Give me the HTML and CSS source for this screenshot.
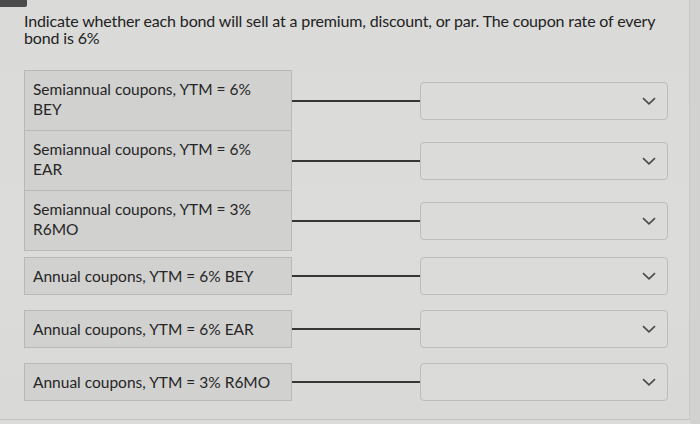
FILE: index.html
```html
<!DOCTYPE html>
<html lang="en">
<head>
<meta charset="utf-8">
<title>Bond premium / discount</title>
<link rel="stylesheet" href="styles.css">
</head>
<body>
<div class="screen">
  <div class="corner"></div>
  <div class="page">
    <p class="prompt">Indicate whether each bond will sell at a premium, discount, or par. The coupon rate of every bond is 6%</p>
    <div class="group stacked">
      <div class="row tall">
        <div class="term">Semiannual coupons, YTM = 6%<br>BEY</div>
        <div class="link"></div>
        <div class="select"><svg class="chev" viewBox="0 0 14 8"><path d="M1 1.2 7 6.8 13 1.2"/></svg></div>
      </div>
      <div class="row tall">
        <div class="term">Semiannual coupons, YTM = 6%<br>EAR</div>
        <div class="link"></div>
        <div class="select"><svg class="chev" viewBox="0 0 14 8"><path d="M1 1.2 7 6.8 13 1.2"/></svg></div>
      </div>
      <div class="row tall">
        <div class="term">Semiannual coupons, YTM = 3%<br>R6MO</div>
        <div class="link"></div>
        <div class="select"><svg class="chev" viewBox="0 0 14 8"><path d="M1 1.2 7 6.8 13 1.2"/></svg></div>
      </div>
    </div>
    <div class="group spaced">
      <div class="row">
        <div class="term">Annual coupons, YTM = 6% BEY</div>
        <div class="link"></div>
        <div class="select"><svg class="chev" viewBox="0 0 14 8"><path d="M1 1.2 7 6.8 13 1.2"/></svg></div>
      </div>
      <div class="row">
        <div class="term">Annual coupons, YTM = 6% EAR</div>
        <div class="link"></div>
        <div class="select"><svg class="chev" viewBox="0 0 14 8"><path d="M1 1.2 7 6.8 13 1.2"/></svg></div>
      </div>
      <div class="row">
        <div class="term">Annual coupons, YTM = 3% R6MO</div>
        <div class="link"></div>
        <div class="select"><svg class="chev" viewBox="0 0 14 8"><path d="M1 1.2 7 6.8 13 1.2"/></svg></div>
      </div>
    </div>
  </div>
</div>
</body>
</html>
```
FILE: styles.css
```css
html, body {
  margin: 0;
  padding: 0;
  background: #e4e4e2;
}
body {
  width: 700px;
  height: 424px;
  overflow: hidden;
  font-family: Lato, "Open Sans", sans-serif;
  color: #2a2a2a;
}
.screen {
  position: relative;
  width: 700px;
  height: 424px;
  background: linear-gradient(90deg, #dcdcdb 0, #dcdcdb 690px, #d2d2d1 690px);
}
.corner {
  position: absolute;
  left: 0;
  top: 0;
  width: 27px;
  height: 7px;
  background: #4a4a4a;
  border-bottom-right-radius: 2px;
}
.page {
  width: 690px;
  height: 420px;
  box-sizing: border-box;
  padding: 12px 0 0 24px;
  border-right: 1px solid #c8c8c7;
  border-bottom: 1px solid #c4c4c3;
  background: linear-gradient(180deg, #dadad9 0%, #dcdcdb 60%, #d9d9d8 100%);
}
.prompt {
  margin: 0 0 24px 0;
  width: 645px;
  font-size: 16px;
  line-height: 17px;
  letter-spacing: -0.15px;
  color: #222;
}
.group {
  display: flex;
  flex-direction: column;
}
.stacked .row + .row {
  margin-top: -1px;
}
.spaced {
  margin-top: 6px;
  gap: 15px;
}
.row {
  display: grid;
  grid-template-columns: 268px 128px 248px;
  align-items: center;
}
.term {
  box-sizing: border-box;
  height: 38px;
  padding: 8px 8px 0 8px;
  background: #d1d1d0;
  border: 1px solid #b9b9b8;
  font-size: 15.5px;
  line-height: 20px;
  color: #262626;
}
.tall .term {
  height: 61px;
  padding-top: 8px;
}
.link {
  height: 2px;
  background: #363636;
}
.select {
  box-sizing: border-box;
  height: 38px;
  border: 1px solid #bdbdbc;
  border-radius: 4px;
  background: #dbdbda;
  display: flex;
  align-items: center;
  justify-content: flex-end;
  padding-right: 11px;
}
.chev {
  width: 14px;
  height: 8px;
  fill: none;
  stroke: #4a4a4a;
  stroke-width: 1.6;
}
```
